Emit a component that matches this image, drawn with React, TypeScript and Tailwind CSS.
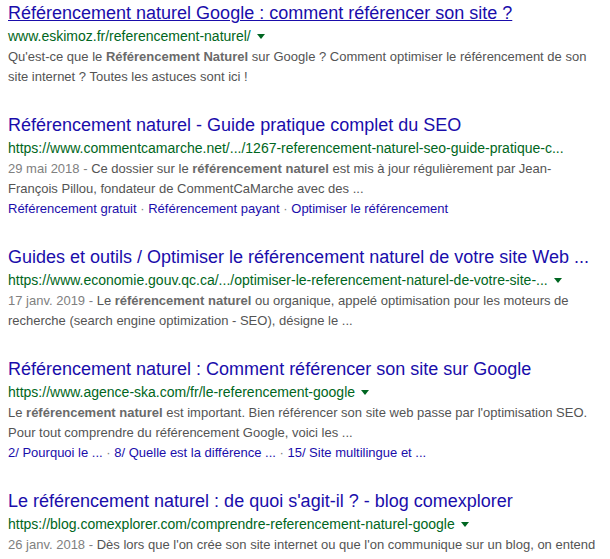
import React from 'react';

type Result = {
  title: string;
  url: string;
  arrow: boolean;
  date?: string;
  snippet: React.ReactNode;
  links?: string[];
  hover?: boolean;
};

const B = ({ children }: { children: React.ReactNode }) => (
  <b className="font-bold text-[#6a6a6a]">{children}</b>
);

const results: Result[] = [
  {
    title: 'Référencement naturel Google : comment référencer son site ?',
    url: 'www.eskimoz.fr/referencement-naturel/',
    arrow: true,
    hover: true,
    snippet: (
      <>
        Qu'est-ce que le <B>Référencement Naturel</B> sur Google ? Comment optimiser le référencement de son site
        internet ? Toutes les astuces sont ici !
      </>
    ),
  },
  {
    title: 'Référencement naturel - Guide pratique complet du SEO',
    url: 'https://www.commentcamarche.net/.../1267-referencement-naturel-seo-guide-pratique-c...',
    arrow: false,
    date: '29 mai 2018',
    snippet: (
      <>
        Ce dossier sur le <B>référencement naturel</B> est mis à jour régulièrement par Jean-François Pillou,
        fondateur de CommentCaMarche avec des ...
      </>
    ),
    links: ['Référencement gratuit', 'Référencement payant', 'Optimiser le référencement'],
  },
  {
    title: 'Guides et outils / Optimiser le référencement naturel de votre site Web ...',
    url: 'https://www.economie.gouv.qc.ca/.../optimiser-le-referencement-naturel-de-votre-site-...',
    arrow: true,
    date: '17 janv. 2019',
    snippet: (
      <>
        Le <B>référencement naturel</B> ou organique, appelé optimisation pour les moteurs de recherche (search
        engine optimization - SEO), désigne le ...
      </>
    ),
  },
  {
    title: 'Référencement naturel : Comment référencer son site sur Google',
    url: 'https://www.agence-ska.com/fr/le-referencement-google',
    arrow: true,
    snippet: (
      <>
        Le <B>référencement naturel</B> est important. Bien référencer son site web passe par l'optimisation SEO.
        Pour tout comprendre du référencement Google, voici les ...
      </>
    ),
    links: ['2/ Pourquoi le ...', '8/ Quelle est la différence ...', '15/ Site multilingue et ...'],
  },
  {
    title: "Le référencement naturel : de quoi s'agit-il ? - blog comexplorer",
    url: 'https://blog.comexplorer.com/comprendre-referencement-naturel-google',
    arrow: true,
    date: '26 janv. 2018',
    snippet: (
      <>
        Dès lors que l'on crée son site internet ou que l'on communique sur un blog, on entend parler de
        référencement naturel ...
      </>
    ),
  },
];

export default function App() {
  return (
    <div className="w-[610px] h-[559px] overflow-hidden bg-white pl-2 font-['Liberation_Sans',Arial,sans-serif]">
      <div className="w-[592px] pt-px">
        {results.map((r, i) => (
          <div key={i} className="mb-[26px]">
            <a
              href="#"
              className={`block text-[18px] leading-[24px] text-[#1a0dab] whitespace-nowrap ${
                r.hover ? 'underline' : 'no-underline'
              }`}
            >
              {r.title}
            </a>
            <div className="flex items-center h-[22px] text-[14px] leading-[22px] text-[#006621] whitespace-nowrap">
              <span>{r.url}</span>
              {r.arrow && (
                <span className="ml-[6px] mt-px w-0 h-0 border-x-[4px] border-x-transparent border-t-[5px] border-t-[#006621]" />
              )}
            </div>
            <div className="text-[13px] leading-[20px] text-[#545454]">
              {r.date && <span className="text-[#808080]">{r.date} - </span>}
              {r.snippet}
            </div>
            {r.links && (
              <div className="text-[13px] leading-[20px] text-[#1a0dab] whitespace-nowrap">
                {r.links.map((l, j) => (
                  <span key={j}>
                    {j > 0 && <span className="text-[#808080]"> · </span>}
                    <a href="#">{l}</a>
                  </span>
                ))}
              </div>
            )}
          </div>
        ))}
      </div>
    </div>
  );
}
